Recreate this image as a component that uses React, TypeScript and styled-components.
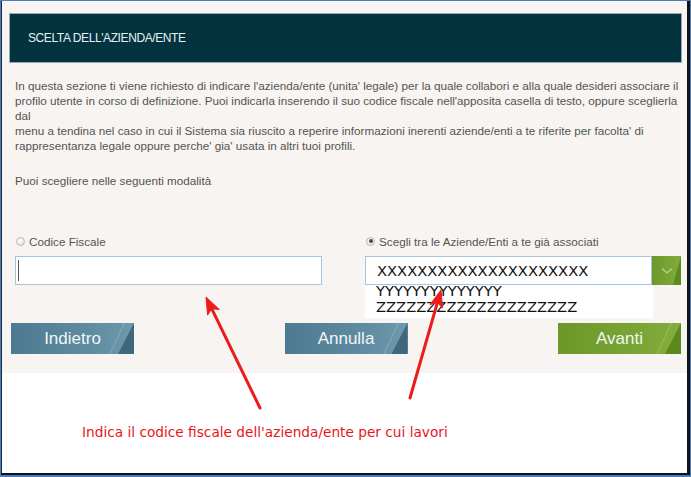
import styled, { createGlobalStyle } from 'styled-components';

const GlobalStyle = createGlobalStyle`
  html, body {
    margin: 0;
    padding: 0;
    background: #ffffff;
  }
  * {
    box-sizing: border-box;
  }
`;

const Frame = styled.div`
  position: relative;
  width: 691px;
  height: 477px;
  border: 1px solid #4a7cc2;
  border-bottom-width: 2px;
  display: flex;
`;

const Inner = styled.div`
  flex: 1;
  display: flex;
  flex-direction: column;
  background: #ffffff;
  border-left: 1px solid #1e2a36;
  border-right: 3px solid #121212;
  border-bottom: 2px solid #121212;
`;

const Page = styled.div`
  height: 372px;
  background: #f7f4f1;
  padding: 12px 5px 0 7px;
  display: flex;
  flex-direction: column;
  font-family: 'Liberation Sans', Arial, sans-serif;
`;

const TitleBar = styled.div`
  height: 50px;
  background: #02333f;
  border: 1px solid #9aabb0;
  display: flex;
  align-items: center;
  padding-left: 18px;
  color: #e6f0f2;
  font-size: 12px;
  letter-spacing: -0.4px;
  text-transform: uppercase;
`;

const Intro = styled.p<{ $gap: number }>`
  margin: ${(p) => p.$gap}px 0 0 6px;
  font-size: 11.7px;
  line-height: 15px;
  color: #545454;
`;

const ChoiceRow = styled.div`
  margin: 46px 1px 0 6px;
  display: flex;
  justify-content: space-between;
`;

const Choice = styled.div<{ $width: number }>`
  width: ${(p) => p.$width}px;
  display: flex;
  flex-direction: column;
  gap: 8px;
`;

const RadioLabel = styled.label`
  display: flex;
  align-items: center;
  gap: 4px;
  height: 14px;
  font-size: 11.7px;
  color: #555555;
  padding-left: 1px;
`;

const Radio = styled.span<{ $checked?: boolean }>`
  position: relative;
  width: 9px;
  height: 9px;
  border-radius: 50%;
  border: 1px solid #b9b9b9;
  background: radial-gradient(circle at 40% 35%, #ffffff, #dcdcdc);

  &::after {
    content: '';
    display: ${(p) => (p.$checked ? 'block' : 'none')};
    position: absolute;
    left: 1.5px;
    top: 1.5px;
    width: 4px;
    height: 4px;
    border-radius: 50%;
    background: #4a4a4a;
  }
`;

const TextField = styled.div`
  position: relative;
  height: 29px;
  background: #ffffff;
  border: 1px solid #a9c5de;

  &::before {
    content: '';
    position: absolute;
    left: 2px;
    top: 3px;
    bottom: 3px;
    width: 1px;
    background: #555555;
  }
`;

const SelectWrap = styled.div`
  position: relative;
  display: flex;
  height: 29px;
`;

const SelectValue = styled.div`
  flex: 1;
  background: #ffffff;
  border: 1px solid #a9c5de;
  padding-left: 11px;
  font-family: 'DejaVu Sans', Verdana, sans-serif;
  font-size: 14.7px;
  line-height: 27px;
  color: #111111;
  white-space: nowrap;
`;

const SelectToggle = styled.div`
  position: relative;
  width: 29px;
  background: linear-gradient(90deg, #6c982a, #82ad3c);
  display: flex;
  align-items: center;
  justify-content: center;
  overflow: hidden;

  &::after {
    content: '';
    position: absolute;
    right: 0;
    bottom: 0;
    width: 8px;
    height: 29px;
    background: #5d8a22;
    clip-path: polygon(100% 0, 100% 100%, 0 100%);
  }
`;

const DropList = styled.div`
  position: absolute;
  top: 29px;
  left: 0;
  width: 288px;
  height: 33px;
  background: #ffffff;
  padding-left: 11px;
  font-family: 'DejaVu Sans', Verdana, sans-serif;
  font-size: 14.7px;
  color: #111111;
  white-space: nowrap;
`;

const Option = styled.div`
  line-height: 16px;

  &:first-child {
    margin-top: -2px;
  }
`;

const ButtonRow = styled.div`
  margin: 38px 1px 0 2px;
  display: flex;
  justify-content: space-between;
`;

const ActionButton = styled.button<{ $tone: 'blue' | 'green' }>`
  position: relative;
  width: 123px;
  height: 31px;
  border: none;
  padding: 0;
  overflow: hidden;
  font-family: 'Liberation Sans', Arial, sans-serif;
  font-size: 17px;
  color: #f1f5f6;
  background: ${(p) =>
    p.$tone === 'green'
      ? 'linear-gradient(90deg, #6b9829 0%, #7aa634 70%, #84ae3e 100%)'
      : 'linear-gradient(90deg, #4d7a90 0%, #5f8ca1 65%, #6d9aae 100%)'};

  &::before {
    content: '';
    position: absolute;
    right: 9px;
    top: 0;
    width: 1px;
    height: 40px;
    background: rgba(255, 255, 255, 0.2);
    transform-origin: top right;
    transform: rotate(25deg);
  }

  &::after {
    content: '';
    position: absolute;
    right: 0;
    bottom: 0;
    width: 16px;
    height: 31px;
    background: ${(p) => (p.$tone === 'green' ? '#5c8820' : '#3f687c')};
    clip-path: polygon(100% 0, 100% 100%, 0 100%);
  }
`;

const Below = styled.div`
  flex: 1;
  padding: 51px 0 0 80px;
`;

const Caption = styled.div`
  font-family: 'DejaVu Sans', Tahoma, sans-serif;
  font-size: 13.7px;
  line-height: 16px;
  color: #e8141a;
`;

const Overlay = styled.svg`
  position: absolute;
  left: -1px;
  top: -1px;
  width: 691px;
  height: 477px;
  pointer-events: none;
`;

const Chevron = () => (
  <svg width="12" height="8" viewBox="0 0 12 8">
    <path d="M1 1.5 L6 6 L11 1.5" fill="none" stroke="#b9d38a" strokeWidth="1.3" />
  </svg>
);

const Arrow = ({ tail, tip }: { tail: [number, number]; tip: [number, number] }) => {
  const dx = tip[0] - tail[0];
  const dy = tip[1] - tail[1];
  const len = Math.hypot(dx, dy);
  const ux = dx / len;
  const uy = dy / len;
  const bx = tip[0] - ux * 17;
  const by = tip[1] - uy * 17;
  const nx = -uy;
  const ny = ux;
  const head = `${tip[0]},${tip[1]} ${bx + nx * 6.5},${by + ny * 6.5} ${bx + ux * 4},${by + uy * 4} ${bx - nx * 6.5},${by - ny * 6.5}`;
  return (
    <g fill="#ec1c1c" stroke="#ec1c1c">
      <line x1={tail[0]} y1={tail[1]} x2={bx + ux * 4} y2={by + uy * 4} strokeWidth="3" strokeLinecap="round" />
      <polygon points={head} strokeWidth="1" strokeLinejoin="round" />
    </g>
  );
};

export default function App() {
  return (
    <>
      <GlobalStyle />
      <Frame>
        <Inner>
          <Page>
            <TitleBar>Scelta dell'azienda/ente</TitleBar>
            <Intro $gap={15}>
              In questa sezione ti viene richiesto di indicare l'azienda/ente (unita' legale) per la quale collabori e alla quale desideri associare il
              profilo utente in corso di definizione. Puoi indicarla inserendo il suo codice fiscale nell'apposita casella di testo, oppure sceglierla
              dal
              <br />
              menu a tendina nel caso in cui il Sistema sia riuscito a reperire informazioni inerenti aziende/enti a te riferite per facolta' di
              rappresentanza legale oppure perche' gia' usata in altri tuoi profili.
            </Intro>
            <Intro $gap={20}>Puoi scegliere nelle seguenti modalità</Intro>
            <ChoiceRow>
              <Choice $width={307}>
                <RadioLabel>
                  <Radio />
                  Codice Fiscale
                </RadioLabel>
                <TextField />
              </Choice>
              <Choice $width={316}>
                <RadioLabel>
                  <Radio $checked />
                  Scegli tra le Aziende/Enti a te già associati
                </RadioLabel>
                <SelectWrap>
                  <SelectValue>XXXXXXXXXXXXXXXXXXXXX</SelectValue>
                  <SelectToggle>
                    <Chevron />
                  </SelectToggle>
                  <DropList>
                    <Option>YYYYYYYYYYYYYY</Option>
                    <Option>ZZZZZZZZZZZZZZZZZZZZ</Option>
                  </DropList>
                </SelectWrap>
              </Choice>
            </ChoiceRow>
            <ButtonRow>
              <ActionButton $tone="blue">Indietro</ActionButton>
              <ActionButton $tone="blue">Annulla</ActionButton>
              <ActionButton $tone="green">Avanti</ActionButton>
            </ButtonRow>
          </Page>
          <Below>
            <Caption>Indica il codice fiscale dell'azienda/ente per cui lavori</Caption>
          </Below>
        </Inner>
        <Overlay viewBox="0 0 691 477">
          <Arrow tail={[260, 408]} tip={[206, 297]} />
          <Arrow tail={[410, 398]} tip={[441, 290]} />
        </Overlay>
      </Frame>
    </>
  );
}
